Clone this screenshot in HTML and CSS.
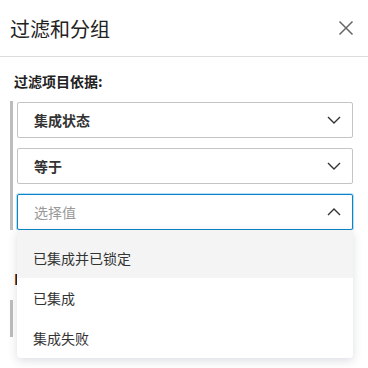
FILE: index.html
```html
<!DOCTYPE html>
<html lang="zh">
<head>
<meta charset="utf-8">
<link rel="stylesheet" href="styles.css">
</head>
<body>
<div class="panel">
  <div class="header">
    <div class="title">过滤和分组</div>
    <svg class="close" width="16" height="16" viewBox="0 0 16 16"><path d="M1.5 1.5L14.5 14.5M14.5 1.5L1.5 14.5" stroke="#666" stroke-width="1.5" fill="none"/></svg>
  </div>
  <div class="content">
    <div class="label">过滤项目依据:</div>
    <div class="group">
      <div class="select">
        <span class="value">集成状态</span>
        <svg class="chev" width="14" height="8" viewBox="0 0 14 8"><path d="M1 1L7 7L13 1" stroke="#333" stroke-width="1.4" fill="none"/></svg>
      </div>
      <div class="select">
        <span class="value">等于</span>
        <svg class="chev" width="14" height="8" viewBox="0 0 14 8"><path d="M1 1L7 7L13 1" stroke="#333" stroke-width="1.4" fill="none"/></svg>
      </div>
      <div class="select-wrap">
        <div class="select open">
          <span class="placeholder">选择值</span>
          <svg class="chev" width="14" height="8" viewBox="0 0 14 8"><path d="M1 7L7 1L13 7" stroke="#333" stroke-width="1.4" fill="none"/></svg>
        </div>
        <div class="dropdown">
          <div class="option active">已集成并已锁定</div>
          <div class="option">已集成</div>
          <div class="option">集成失败</div>
        </div>
      </div>
    </div>
    <div class="label second">I分组依据:</div>
    <div class="group short">
      <div class="select"><span class="value">无</span></div>
    </div>
  </div>
</div>
</body>
</html>
```

FILE: styles.css
```css
html, body {
  margin: 0;
  padding: 0;
  background: #fff;
}
body {
  font-family: "Noto Sans CJK SC", "Noto Sans", sans-serif;
  color: #333;
  width: 368px;
  height: 368px;
  overflow: hidden;
}
.header {
  height: 56px;
  display: flex;
  align-items: center;
  justify-content: space-between;
  padding: 0 14px 0 10px;
  border-bottom: 1px solid #dcdcdc;
}
.title {
  font-size: 20px;
  line-height: 24px;
  color: #222;
  margin-top: 1px;
}
.close {
  display: block;
  margin-top: 0;
}
.content {
  padding: 0 15px 0 10px;
}
.label {
  font-size: 14px;
  font-weight: 700;
  line-height: 20px;
  margin-top: 14px;
  margin-left: 4px;
  color: #222;
}
.label.second {
  margin-top: 39px;
}
.group {
  margin-top: 10px;
  border-left: 3px solid #bdbdbd;
  padding: 1px 0 0 4px;
  display: flex;
  flex-direction: column;
  gap: 10px;
}
.group.short {
  margin-top: 11px;
}
.select {
  height: 34px;
  border: 1px solid #c4c4c4;
  border-radius: 2px;
  display: flex;
  align-items: center;
  justify-content: space-between;
  padding: 0 11px 0 16px;
  font-size: 14px;
  background: #fff;
}
.value {
  font-weight: 600;
  color: #333;
}
.placeholder {
  color: #999;
}
.select.open {
  border-color: #0a86c8;
  box-shadow: 0 0 0 1px #b8def3;
}
.chev {
  display: block;
}
.select-wrap {
  position: relative;
}
.dropdown {
  position: absolute;
  top: 36px;
  left: 0;
  right: 0;
  background: #fff;
  border-radius: 0 0 4px 4px;
  box-shadow: 0 3px 10px rgba(40, 50, 80, 0.16);
  overflow: hidden;
  z-index: 5;
}
.option {
  height: 40px;
  line-height: 40px;
  padding-left: 16px;
  font-size: 14px;
  color: #333;
}
.option.active {
  background: #f4f4f4;
  padding-top: 8px;
}
```
